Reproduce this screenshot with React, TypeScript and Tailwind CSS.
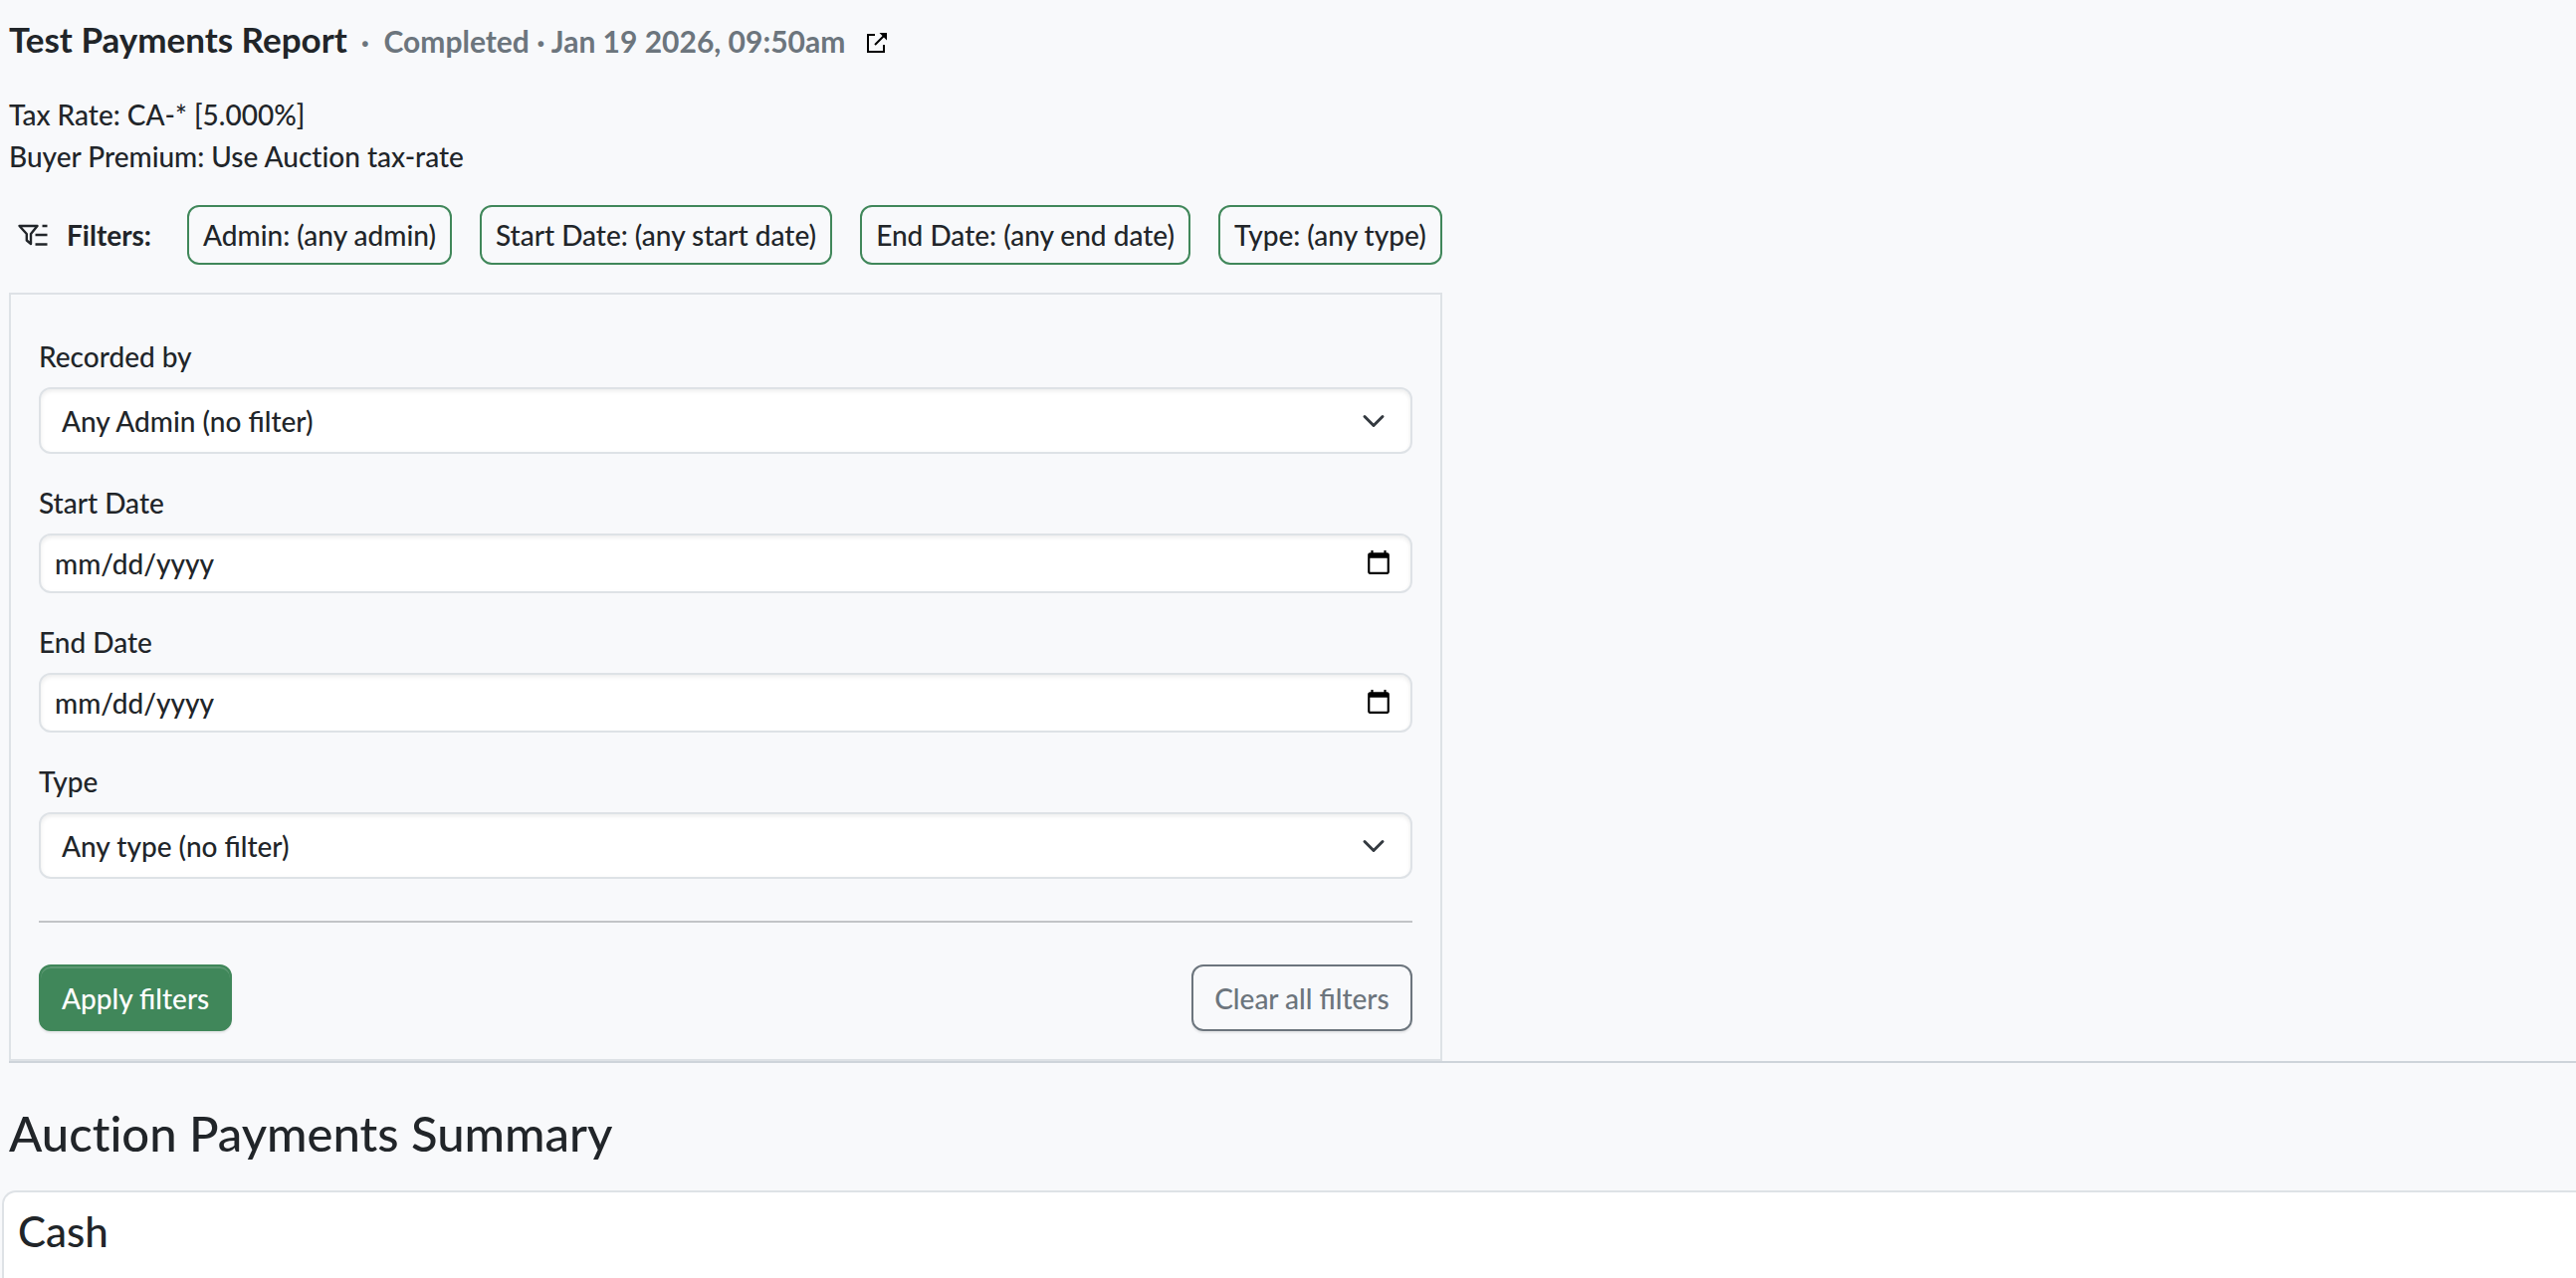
import { useId, useState } from "react";
import type { ReactNode } from "react";

const activeFilters = [
  "Admin: (any admin)",
  "Start Date: (any start date)",
  "End Date: (any end date)",
  "Type: (any type)",
];

const controlClass =
  "block w-full rounded-xl border-2 border-[#dee2e6] bg-white text-[28px] leading-[42px] text-[#212529] shadow-[inset_0_2px_4px_rgba(0,0,0,0.08)]";

function FilterIcon() {
  return (
    <svg className="h-[22px] w-8" viewBox="0 0 32 22" fill="none" stroke="currentColor" strokeWidth="2.400" aria-hidden="true">
      <path d="M2.500 2H20.500L14 10V20L9.800 16.500V10Z" strokeLinejoin="round" />
      <path d="M25.500 2H30.500M18.500 11H30.500M18.500 20.500H30.500" />
    </svg>
  );
}

function ExternalIcon() {
  return (
    <svg className="size-5" viewBox="0 0 20 20" fill="none" stroke="currentColor" strokeWidth="2" aria-hidden="true">
      <path d="M8 2H1V19H17V12" />
      <path d="M8 12L17 3" />
      <path d="M12.500 0H20V7.500Z" fill="currentColor" stroke="none" />
    </svg>
  );
}

function SelectField({ label, option }: { label: string; option: string }) {
  const id = useId();
  return (
    <div>
      <label htmlFor={id} className="mb-2.5 block">
        {label}
      </label>
      <div className="relative">
        <select id={id} className={`${controlClass} h-[67px] appearance-none pr-16 pl-[21px]`}>
          <option>{option}</option>
        </select>
        <svg
          className="pointer-events-none absolute inset-y-0 right-[23px] my-auto h-6 w-8"
          viewBox="0 0 16 16"
          fill="none"
          stroke="#343a40"
          strokeWidth="2"
          strokeLinecap="round"
          strokeLinejoin="round"
          aria-hidden="true"
        >
          <path d="m2 5 6 6 6-6" />
        </svg>
      </div>
    </div>
  );
}

function DateField({ label }: { label: string }) {
  const id = useId();
  const [value, setValue] = useState("");
  return (
    <div>
      <label htmlFor={id} className="mb-2.5 block">
        {label}
      </label>
      <input
        id={id}
        type="date"
        value={value}
        onChange={(e) => setValue(e.target.value)}
        className={`${controlClass} h-[60px] pr-4 pl-3.5 [&::-webkit-datetime-edit-day-field]:p-0 [&::-webkit-datetime-edit-month-field]:p-0 [&::-webkit-datetime-edit-year-field]:p-0`}
      />
    </div>
  );
}

function Chip({ children }: { children: ReactNode }) {
  return (
    <button type="button" className="rounded-xl border-2 border-[#40875a] px-3.5 py-[7px] whitespace-nowrap">
      {children}
    </button>
  );
}

export default function App() {
  return (
    <div className="min-h-screen overflow-hidden bg-[#f8f9fb] font-['Lato',sans-serif] text-[28px] leading-[42px] font-medium text-[#212529]">
      <header className="flex items-baseline pt-[18px] pl-[9px] font-bold">
        <h1 className="text-[35px]">Test Payments Report</h1>
        <p className="ml-3.5 text-[30px] whitespace-pre text-[#6c757d]">·  Completed · Jan 19 2026, 09:50am</p>
        <a href="#report" aria-label="Open report" className="ml-[22px] text-black">
          <ExternalIcon />
        </a>
      </header>

      <section className="mt-8 pl-[9px]">
        <p>Tax Rate: CA-* [5.000%]</p>
        <p className="[font-variant-ligatures:none]">Buyer Premium: Use Auction tax-rate</p>

        {/* Filtros ativos + formulário, largura definida pelos chips */}
        <div className="mt-7 w-fit">
          <div className="flex items-center gap-7">
            <div className="flex items-center gap-[18px] px-2 font-bold">
              <FilterIcon />
              <span>Filters:</span>
            </div>
            {activeFilters.map((text) => (
              <Chip key={text}>{text}</Chip>
            ))}
          </div>

          <form
            className="mt-7 border-2 border-[#dee2e6] px-7 pt-[41px] pb-7"
            onSubmit={(e) => e.preventDefault()}
          >
            <div className="flex flex-col gap-7">
              <SelectField label="Recorded by" option="Any Admin (no filter)" />
              <DateField label="Start Date" />
              <DateField label="End Date" />
              <SelectField label="Type" option="Any type (no filter)" />
            </div>
            <hr className="my-[42px] border-t-2 border-[#c2c4c7]" />
            <div className="flex justify-between">
              <button
                type="submit"
                className="h-[67px] rounded-xl border-2 border-[#40875a] bg-[#40875a] px-[21px] text-white shadow-[inset_0_2px_0_rgba(255,255,255,0.15),0_2px_2px_rgba(0,0,0,0.08)]"
              >
                Apply filters
              </button>
              <button
                type="reset"
                className="h-[67px] rounded-xl border-2 border-[#6c757d] px-[21px] text-[#6c757d] shadow-[0_2px_2px_rgba(0,0,0,0.08)]"
              >
                Clear all filters
              </button>
            </div>
          </form>
        </div>
      </section>

      <hr className="ml-[9px] border-t-2 border-[#ced4da]" />

      <main className="pl-0.5">
        <h2 className="mt-10 mb-7 pl-[7px] text-[49px] leading-[60px] [font-variant-ligatures:none]">
          Auction Payments Summary
        </h2>
        <section className="h-[90px] rounded-tl-[14px] border-t-2 border-l-2 border-[#dee2e6] bg-white pt-3.5 pl-3.5">
          <h3 className="text-[42px] leading-[50px]">Cash</h3>
        </section>
      </main>
    </div>
  );
}
